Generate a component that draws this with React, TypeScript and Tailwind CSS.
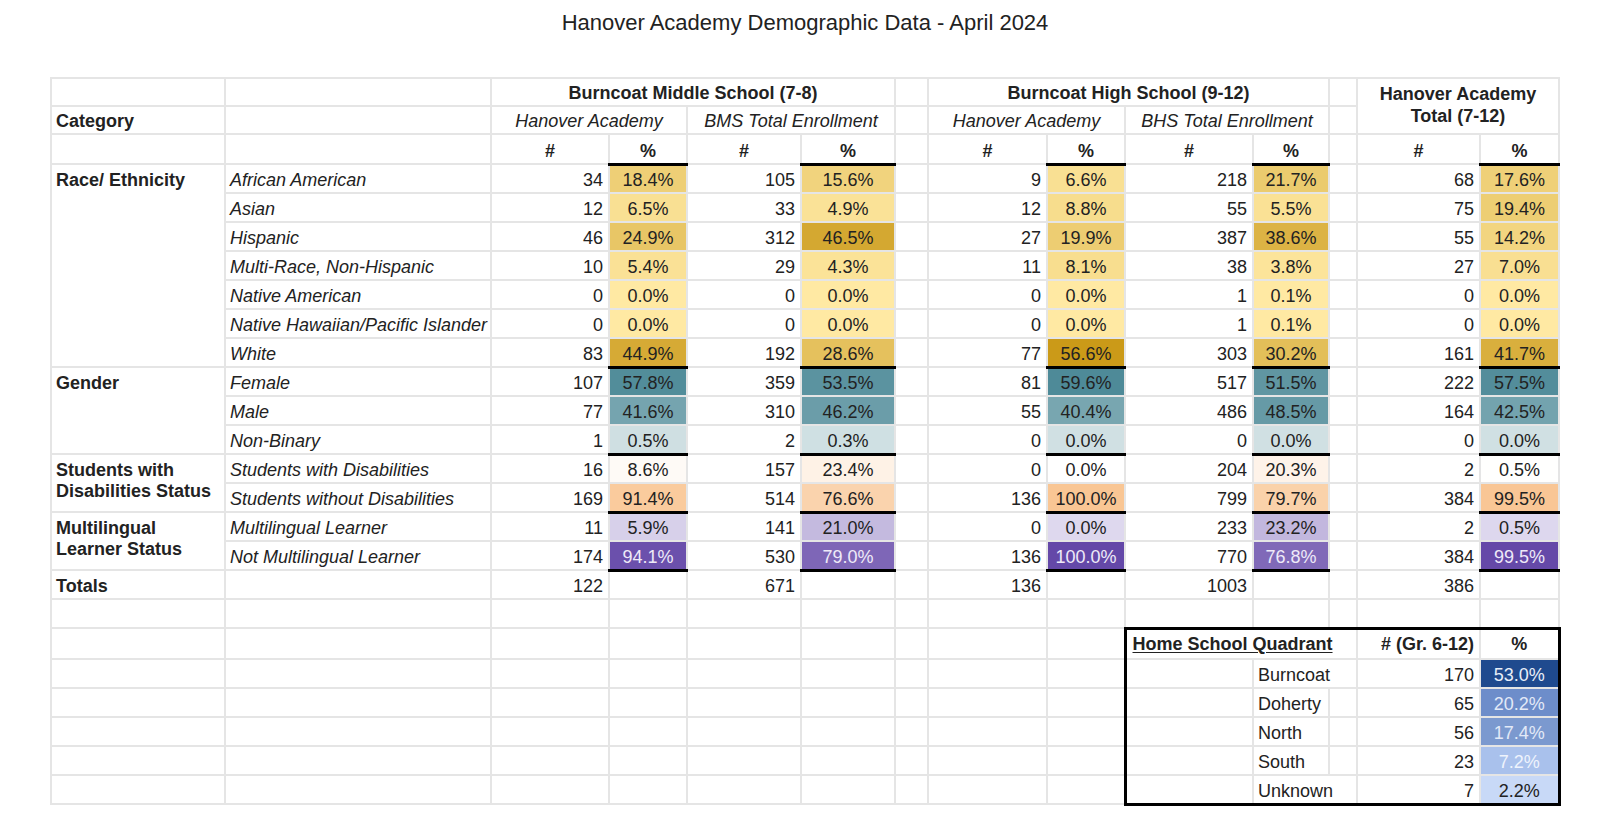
import React from "react";

type Pair = [number, number];
type Scale = "y" | "t" | "o" | "p";

const SCALES: Record<Scale, { min: number[]; max: number[]; top: number }> = {
  y: { min: [255, 233, 163], max: [203, 154, 24], top: 56.6 },
  t: { min: [208, 224, 227], max: [78, 138, 152], top: 59.6 },
  o: { min: [255, 255, 255], max: [249, 198, 148], top: 100 },
  p: { min: [222, 216, 238], max: [100, 72, 168], top: 100 },
};

function bg(scale: Scale, v: number) {
  const s = SCALES[scale];
  const t = Math.max(0, Math.min(1, v / s.top));
  const c = s.min.map((m, i) => Math.round(m + (s.max[i] - m) * t));
  return `rgb(${c[0]},${c[1]},${c[2]})`;
}

type Row = {
  cat?: { label: string; span: number };
  sub: string;
  vals: Pair[];
  scale: Scale;
  top?: boolean;
  bottom?: boolean;
};

const rows: Row[] = [
  { cat: { label: "Race/ Ethnicity", span: 7 }, sub: "African American", vals: [[34, 18.4], [105, 15.6], [9, 6.6], [218, 21.7], [68, 17.6]], scale: "y", top: true },
  { sub: "Asian", vals: [[12, 6.5], [33, 4.9], [12, 8.8], [55, 5.5], [75, 19.4]], scale: "y" },
  { sub: "Hispanic", vals: [[46, 24.9], [312, 46.5], [27, 19.9], [387, 38.6], [55, 14.2]], scale: "y" },
  { sub: "Multi-Race, Non-Hispanic", vals: [[10, 5.4], [29, 4.3], [11, 8.1], [38, 3.8], [27, 7.0]], scale: "y" },
  { sub: "Native American", vals: [[0, 0], [0, 0], [0, 0], [1, 0.1], [0, 0]], scale: "y" },
  { sub: "Native Hawaiian/Pacific Islander", vals: [[0, 0], [0, 0], [0, 0], [1, 0.1], [0, 0]], scale: "y" },
  { sub: "White", vals: [[83, 44.9], [192, 28.6], [77, 56.6], [303, 30.2], [161, 41.7]], scale: "y", bottom: true },
  { cat: { label: "Gender", span: 3 }, sub: "Female", vals: [[107, 57.8], [359, 53.5], [81, 59.6], [517, 51.5], [222, 57.5]], scale: "t" },
  { sub: "Male", vals: [[77, 41.6], [310, 46.2], [55, 40.4], [486, 48.5], [164, 42.5]], scale: "t" },
  { sub: "Non-Binary", vals: [[1, 0.5], [2, 0.3], [0, 0], [0, 0], [0, 0]], scale: "t", bottom: true },
  { cat: { label: "Students with Disabilities Status", span: 2 }, sub: "Students with Disabilities", vals: [[16, 8.6], [157, 23.4], [0, 0], [204, 20.3], [2, 0.5]], scale: "o" },
  { sub: "Students without Disabilities", vals: [[169, 91.4], [514, 76.6], [136, 100], [799, 79.7], [384, 99.5]], scale: "o", bottom: true },
  { cat: { label: "Multilingual Learner Status", span: 2 }, sub: "Multilingual Learner", vals: [[11, 5.9], [141, 21.0], [0, 0], [233, 23.2], [2, 0.5]], scale: "p" },
  { sub: "Not Multilingual Learner", vals: [[174, 94.1], [530, 79.0], [136, 100], [770, 76.8], [384, 99.5]], scale: "p", bottom: true },
];

const quad = [
  { name: "Burncoat", n: 170, pct: "53.0%", bg: "bg-[#1f4a8e]", fg: "text-[#e8eef8]", wide: true },
  { name: "Doherty", n: 65, pct: "20.2%", bg: "bg-[#6d8dca]", fg: "text-[#e2e9f7]", wide: false },
  { name: "North", n: 56, pct: "17.4%", bg: "bg-[#7b99cf]", fg: "text-[#e2e9f7]", wide: false },
  { name: "South", n: 23, pct: "7.2%", bg: "bg-[#a9c1ec]", fg: "text-[#eef3fc]", wide: false },
  { name: "Unknown", n: 7, pct: "2.2%", bg: "bg-[#c8d9f7]", fg: "text-[#222]", wide: true },
];

const cell = "border-2 border-[#e5e5e5] p-0 align-bottom pb-[1px] whitespace-nowrap";
const num = `${cell} text-right pr-[5px]`;
const pctC = `${cell} text-center`;
const txt = `${cell} text-left pl-[4px]`;

function Empty({ n }: { n: number }) {
  return (
    <>
      {Array.from({ length: n }).map((_, i) => (
        <td key={i} className={cell}></td>
      ))}
    </>
  );
}

export default function App() {
  return (
    <div className="min-h-screen w-full bg-white font-['Liberation_Sans',Arial,sans-serif] text-[#222]">
      <div className="ml-[51px] w-[1508px] pt-[10px] h-[77px] text-center text-[22px] leading-[26px]">
        Hanover Academy Demographic Data - April 2024
      </div>
      <table className="ml-[50px] table-fixed border-collapse text-[18px] leading-[21px]">
        <colgroup>
          <col className="w-[174px]" />
          <col className="w-[266px]" />
          <col className="w-[118px]" />
          <col className="w-[78px]" />
          <col className="w-[114px]" />
          <col className="w-[94px]" />
          <col className="w-[33px]" />
          <col className="w-[119px]" />
          <col className="w-[78px]" />
          <col className="w-[128px]" />
          <col className="w-[76px]" />
          <col className="w-[28px]" />
          <col className="w-[123px]" />
          <col className="w-[79px]" />
        </colgroup>
        <tbody>
          <tr className="h-[28px]">
            <td className={cell}></td>
            <td className={cell}></td>
            <td colSpan={4} className={`${pctC} font-bold`}>Burncoat Middle School (7-8)</td>
            <td className={cell}></td>
            <td colSpan={4} className={`${pctC} font-bold`}>Burncoat High School (9-12)</td>
            <td className={cell}></td>
            <td colSpan={2} rowSpan={2} className="border-2 border-[#e5e5e5] p-0 pt-[4px] align-top text-center font-bold leading-[22px]">
              Hanover Academy
              <br />
              Total (7-12)
            </td>
          </tr>
          <tr className="h-[28px]">
            <td className={`${txt} font-bold`}>Category</td>
            <td className={cell}></td>
            <td colSpan={2} className={`${pctC} italic`}>Hanover Academy</td>
            <td colSpan={2} className={`${pctC} italic`}>BMS Total Enrollment</td>
            <td className={cell}></td>
            <td colSpan={2} className={`${pctC} italic`}>Hanover Academy</td>
            <td colSpan={2} className={`${pctC} italic`}>BHS Total Enrollment</td>
            <td className={cell}></td>
          </tr>
          <tr className="h-[30px]">
            <td className={cell}></td>
            <td className={cell}></td>
            <td className={`${pctC} font-bold`}>#</td>
            <td className={`${pctC} font-bold`}>%</td>
            <td className={`${pctC} font-bold`}>#</td>
            <td className={`${pctC} font-bold`}>%</td>
            <td className={cell}></td>
            <td className={`${pctC} font-bold`}>#</td>
            <td className={`${pctC} font-bold`}>%</td>
            <td className={`${pctC} font-bold`}>#</td>
            <td className={`${pctC} font-bold`}>%</td>
            <td className={cell}></td>
            <td className={`${pctC} font-bold`}>#</td>
            <td className={`${pctC} font-bold`}>%</td>
          </tr>
          {rows.map((r, ri) => (
            <tr key={ri} className="h-[29px]">
              {r.cat && (
                <td
                  rowSpan={r.cat.span}
                  className="border-2 border-[#e5e5e5] p-0 pl-[4px] pt-[5px] align-top text-left font-bold leading-[21px]"
                >
                  {r.cat.label}
                </td>
              )}
              <td className={`${txt} italic`}>{r.sub}</td>
              {r.vals.map(([n, p], i) => {
                const dark = r.scale === "p" && p > 70;
                return (
                  <React.Fragment key={i}>
                    <td className={num}>{n}</td>
                    <td
                      className={`${pctC} ${r.top ? "border-t-[3px] border-t-black" : ""} ${r.bottom ? "border-b-[3px] border-b-black" : ""} ${dark ? "text-[#eeeaf8]" : ""}`}
                      style={{ backgroundColor: bg(r.scale, p) }}
                    >
                      {p.toFixed(1)}%
                    </td>
                    {(i === 1 || i === 3) && <td className={cell}></td>}
                  </React.Fragment>
                );
              })}
            </tr>
          ))}
          <tr className="h-[29px]">
            <td className={`${txt} font-bold`}>Totals</td>
            <td className={cell}></td>
            <td className={num}>122</td>
            <td className={cell}></td>
            <td className={num}>671</td>
            <td className={cell}></td>
            <td className={cell}></td>
            <td className={num}>136</td>
            <td className={cell}></td>
            <td className={num}>1003</td>
            <td className={cell}></td>
            <td className={cell}></td>
            <td className={num}>386</td>
            <td className={cell}></td>
          </tr>
          <tr className="h-[29px]">
            <Empty n={14} />
          </tr>
          <tr className="h-[31px]">
            <Empty n={9} />
            <td
              colSpan={3}
              className={`${txt} font-bold underline underline-offset-[2px] pl-[6px] pb-[3px] border-t-[3px] border-t-black border-l-[3px] border-l-black`}
            >
              Home School Quadrant
            </td>
            <td className={`${num} font-bold pb-[3px] border-t-[3px] border-t-black`}>
              # (Gr. 6-12)
            </td>
            <td className={`${pctC} font-bold pb-[3px] border-t-[3px] border-t-black border-r-[3px] border-r-black`}>%</td>
          </tr>
          {quad.map((q, qi) => {
            const last = qi === quad.length - 1;
            const b = last ? "border-b-[3px] border-b-black" : "";
            return (
              <tr key={q.name} className="h-[29px]">
                <Empty n={9} />
                <td className={`${cell} border-l-[3px] border-l-black ${b}`}></td>
                {q.wide ? (
                  <td colSpan={2} className={`${txt} ${b}`}>{q.name}</td>
                ) : (
                  <>
                    <td className={`${txt} ${b}`}>{q.name}</td>
                    <td className={`${cell} ${b}`}></td>
                  </>
                )}
                <td className={`${num} ${b}`}>{q.n}</td>
                <td className={`${pctC} ${q.bg} ${q.fg} border-r-[3px] border-r-black ${b}`}>{q.pct}</td>
              </tr>
            );
          })}
        </tbody>
      </table>
    </div>
  );
}
